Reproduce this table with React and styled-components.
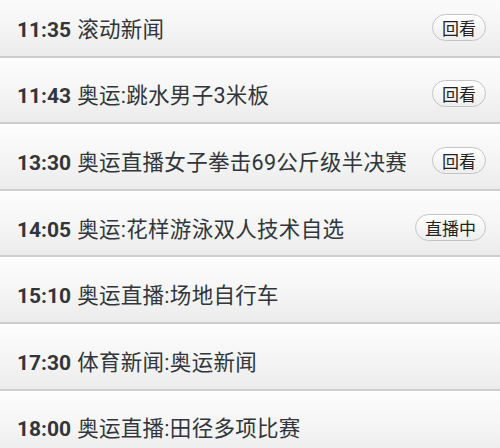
import React from "react";
import styled, { createGlobalStyle } from "styled-components";

const GlobalStyle = createGlobalStyle`
  html, body {
    margin: 0;
    padding: 0;
    background: #ececec;
    overflow: hidden;
  }
`;

const List = styled.ul`
  list-style: none;
  margin: -9px 0 0 0;
  padding: 0;
  width: 500px;
  font-family: Roboto, "Noto Sans CJK SC", sans-serif;
`;

const Row = styled.li`
  box-sizing: border-box;
  height: 66.6px;
  display: flex;
  align-items: center;
  justify-content: space-between;
  padding: 8px 14px 0 17px;
  background: linear-gradient(180deg, #fdfdfd 0%, #f4f4f4 60%, #ebebeb 100%);
  border-bottom: 2px solid #cdcdcd;
  box-shadow: inset 0 1px 0 #ffffff;
`;

const Title = styled.div`
  font-size: 21.5px;
  letter-spacing: 0.3px;
  color: #30363b;
  white-space: nowrap;
`;

const Time = styled.span`
  font-weight: 700;
  font-size: 21px;
  letter-spacing: 0;
  margin-right: 6px;
`;

const Badge = styled.span`
  display: inline-flex;
  align-items: center;
  justify-content: center;
  height: 27px;
  padding: 0 ${(p) => (p.$wide ? "9px" : "9px")};
  border: 1px solid #c4c4c4;
  border-radius: 14px;
  background: linear-gradient(180deg, #ffffff 0%, #eeeeee 100%);
  font-size: 17px;
  color: #222;
  font-family: "Noto Sans CJK SC", sans-serif;
  box-sizing: border-box;
`;

const items = [
  { time: "11:35", title: "滚动新闻", badge: "回看" },
  { time: "11:43", title: "奥运:跳水男子3米板", badge: "回看" },
  { time: "13:30", title: "奥运直播女子拳击69公斤级半决赛", badge: "回看" },
  { time: "14:05", title: "奥运:花样游泳双人技术自选", badge: "直播中" },
  { time: "15:10", title: "奥运直播:场地自行车" },
  { time: "17:30", title: "体育新闻:奥运新闻" },
  { time: "18:00", title: "奥运直播:田径多项比赛" },
];

export default function App() {
  return (
    <>
      <GlobalStyle />
      <List>
        {items.map((it) => (
          <Row key={it.time}>
            <Title>
              <Time>{it.time}</Time>
              {it.title}
            </Title>
            {it.badge && <Badge $wide={it.badge.length > 2}>{it.badge}</Badge>}
          </Row>
        ))}
      </List>
    </>
  );
}
